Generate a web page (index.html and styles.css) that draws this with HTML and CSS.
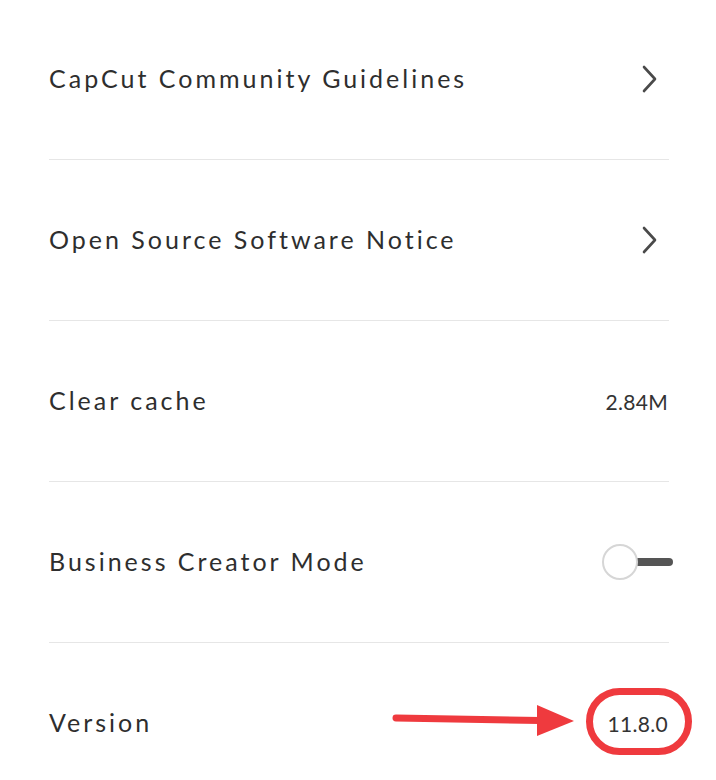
FILE: index.html
```html
<!DOCTYPE html>
<html>
<head>
  <title>Settings</title>
  <link rel="stylesheet" href="styles.css">
</head>
<body>

  <div class="list">
    <div class="row">
      <span class="label">CapCut Community Guidelines</span>
      <svg class="chevron" width="20" height="28" viewBox="0 0 20 28">
        <path d="M4 2 L15 14 L4 26" fill="none" stroke="#4a4a4a" stroke-width="2.6" stroke-linecap="round" stroke-linejoin="round"/>
      </svg>
    </div>
    <div class="row">
      <span class="label">Open Source Software Notice</span>
      <svg class="chevron" width="20" height="28" viewBox="0 0 20 28">
        <path d="M4 2 L15 14 L4 26" fill="none" stroke="#4a4a4a" stroke-width="2.6" stroke-linecap="round" stroke-linejoin="round"/>
      </svg>
    </div>
    <div class="row">
      <span class="label">Clear cache</span>
      <span class="value">2.84M</span>
    </div>
    <div class="row">
      <span class="label">Business Creator Mode</span>
      <div class="toggle">
        <div class="track"></div>
        <div class="knob"></div>
      </div>
    </div>
    <div class="row last">
      <span class="label">Version</span>
      <!-- annotation arrow drawn over the row -->
      <svg class="arrow" width="190" height="40" viewBox="0 0 190 40">
        <path d="M4 18 L148 20.5" stroke="#ef3a3e" stroke-width="7" stroke-linecap="round"/>
        <polygon points="145,5 182,21 145,36" fill="#ef3a3e"/>
      </svg>
      <span class="value circled">11.8.0</span>
    </div>
  </div>

</body>
</html>
```

FILE: styles.css
```css
body {
  margin: 0;
  background: #fff;
}

.list {
  margin-top: -1px;
  padding: 0 47px 0 49px;
}

.row {
  position: relative;
  height: 160px;
  display: flex;
  align-items: center;
  justify-content: space-between;
  border-bottom: 1px solid #e6e6e6;
}

.row.last {
  border-bottom: none;
}

.label {
  font-family: Lato, "Liberation Sans", sans-serif;
  font-size: 25px;
  font-weight: 400;
  letter-spacing: 3px;
  color: #2e2e2e;
  margin-bottom: 3px;
}

.value {
  font-family: Lato, "Liberation Sans", sans-serif;
  font-size: 21px;
  font-weight: 400;
  letter-spacing: 0.3px;
  color: #333;
  margin-right: 1px;
}

.chevron {
  margin-right: 9px;
}

/* toggle, off state */
.toggle {
  position: relative;
  width: 71px;
  height: 36px;
  margin-right: -4px;
}

.track {
  position: absolute;
  left: 32px;
  right: 0;
  top: 14px;
  height: 8px;
  border-radius: 4px;
  background: #555;
}

.knob {
  position: absolute;
  left: 0;
  top: 0;
  width: 32px;
  height: 32px;
  border: 2px solid #d6d6d6;
  border-radius: 50%;
  background: #fff;
}

/* red annotation */
.circled {
  position: relative;
}

.circled::after {
  content: "";
  position: absolute;
  top: -23px;
  bottom: -19px;
  left: -22px;
  right: -24px;
  border: 7px solid #ef3a3e;
  border-radius: 34px;
}

.arrow {
  position: absolute;
  left: 343px;
  top: 57px;
}
```
